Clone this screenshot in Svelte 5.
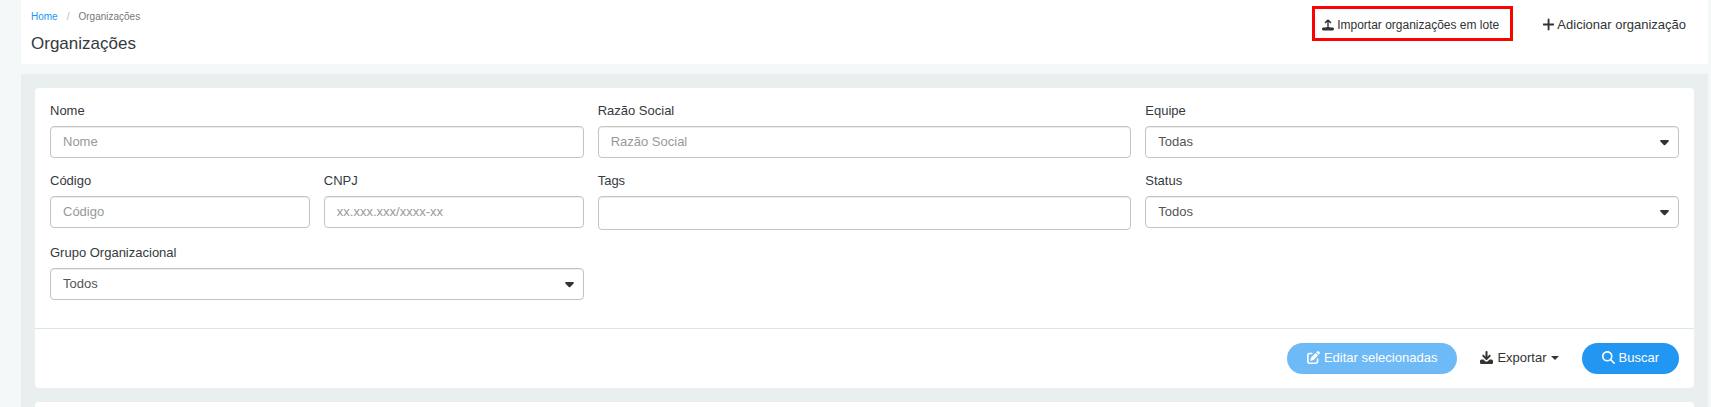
<script>
    let filters = $state({
        name: "",
        legalName: "",
        team: "Todas",
        code: "",
        cnpj: "",
        tags: "",
        status: "Todos",
        group: "Todos",
    });

    const selected = [];
</script>

{#snippet caret()}
    <svg class="caret" viewBox="0 0 9 6" aria-hidden="true">
        <path
            d="M1 0h7c.8 0 1.200.9.600 1.500L5.200 5c-.4.4-1 .4-1.400 0L.400 1.500C-.200.900.200 0 1 0z"
        />
    </svg>
{/snippet}

{#snippet textField(id, label, key, placeholder, size)}
    <div class="field {size}">
        <label for={id}>{label}</label>
        <input {id} type="text" {placeholder} bind:value={filters[key]} />
    </div>
{/snippet}

{#snippet selectField(id, label, key, option)}
    <div class="field wide">
        <label for={id}>{label}</label>
        <div class="select">
            <select {id} bind:value={filters[key]}>
                <option>{option}</option>
            </select>
            {@render caret()}
        </div>
    </div>
{/snippet}

<div class="page">
    <header>
        <div>
            <nav aria-label="breadcrumb">
                <a href="#home">Home</a>
                <span class="separator">/</span>
                <span>Organizações</span>
            </nav>
            <h1>Organizações</h1>
        </div>

        <div class="header-actions">
            <button type="button" class="link import">
                <svg class="icon" viewBox="0 0 512 512" aria-hidden="true">
                    <path
                        d="M226 340V120l-62 56c-14 12-34 10-44-2s-10-32 4-44L236 24c12-10 28-10 40 0l112 106c14 12 14 32 4 44s-30 14-44 2l-62-56v220c60 10 80 24 120 24h34c40 0 72 24 72 62s-30 66-66 66H66c-36 0-66-28-66-66s32-62 72-62h34c40 0 60-14 120-24z"
                    />
                </svg>
                Importar organizações em lote
            </button>
            <button type="button" class="link">
                <svg class="icon" viewBox="32 32 384 448" aria-hidden="true">
                    <path
                        d="M256 80c0-18-14-32-32-32s-32 14-32 32v144H48c-18 0-32 14-32 32s14 32 32 32h144v144c0 18 14 32 32 32s32-14 32-32V288h144c18 0 32-14 32-32s-14-32-32-32H256z"
                    />
                </svg>
                Adicionar organização
            </button>
        </div>
    </header>

    <main>
        <form class="card" onsubmit={(e) => e.preventDefault()}>
            <div class="fields">
                {@render textField("name", "Nome", "name", "Nome", "wide")}
                {@render textField("legal-name", "Razão Social", "legalName", "Razão Social", "wide")}
                {@render selectField("team", "Equipe", "team", "Todas")}
                <div class="pair">
                    {@render textField("code", "Código", "code", "Código", "half")}
                    {@render textField("cnpj", "CNPJ", "cnpj", "xx.xxx.xxx/xxxx-xx", "half")}
                </div>
                {@render textField("tags", "Tags", "tags", "", "tags")}
                {@render selectField("status", "Status", "status", "Todos")}
                {@render selectField("group", "Grupo Organizacional", "group", "Todos")}
            </div>

            <footer>
                <button type="button" class="pill" disabled={selected.length === 0}>
                    <svg class="icon" viewBox="0 0 512 512" aria-hidden="true">
                        <path
                            d="M471.600 21.700c-21.900-21.900-57.300-21.900-79.200 0L362.300 51.700l97.900 97.900 30.100-30.100c21.900-21.900 21.900-57.300 0-79.200L471.600 21.700zm-299.200 220c-6.100 6.100-10.800 13.600-13.500 21.900l-29.600 88.800c-2.900 8.600-.6 18.100 5.800 24.600s15.900 8.700 24.600 5.800l88.800-29.600c8.200-2.700 15.700-7.400 21.900-13.500L437.700 172.300 339.700 74.300 172.400 241.700zM96 64C43 64 0 107 0 160V416c0 53 43 96 96 96H352c53 0 96-43 96-96V320c0-17.700-14.300-32-32-32s-32 14.300-32 32v96c0 17.700-14.300 32-32 32H96c-17.700 0-32-14.300-32-32V160c0-17.700 14.300-32 32-32h96c17.700 0 32-14.300 32-32s-14.300-32-32-32H96z"
                        />
                    </svg>
                    Editar selecionadas
                </button>
                <button type="button" class="link">
                    <svg class="icon" viewBox="0 0 512 512" aria-hidden="true">
                        <path
                            d="M296 32c0-20-16-32-40-32s-40 12-40 32v190l-62-62c-14-14-38-14-52 0s-14 38 0 52l128 128c14 14 38 14 52 0l128-128c14-14 14-38 0-52s-38-14-52 0l-62 62V32zM64 336c-35 0-64 29-64 64v48c0 35 29 64 64 64H448c35 0 64-29 64-64V400c0-35-29-64-64-64H374L316 394c-34 32-86 32-120 0L138 336H64z"
                        />
                    </svg>
                    Exportar
                    <svg class="caret small" viewBox="0 0 8 4" aria-hidden="true">
                        <path d="M0 0h8L4 4z" />
                    </svg>
                </button>
                <button type="submit" class="pill">
                    <svg class="icon" viewBox="0 0 512 512" aria-hidden="true">
                        <path
                            d="M416 208c0 45.900-14.900 88.300-40 122.700L502.600 457.400c12.500 12.500 12.500 32.800 0 45.300s-32.800 12.500-45.300 0L330.700 376c-34.400 25.200-76.800 40-122.700 40C93.100 416 0 322.900 0 208S93.100 0 208 0S416 93.100 416 208zM208 352a144 144 0 1 0 0-288 144 144 0 1 0 0 288z"
                        />
                    </svg>
                    Buscar
                </button>
            </footer>
        </form>

        <section class="card results"></section>
    </main>
</div>

<style>
    :global(body) {
        background: #f4f8f9;
    }

    .page {
        display: flex;
        flex-direction: column;
        min-height: 100vh;
        margin: 0 3px 0 21px;
        font-family: "Liberation Sans", Arial, sans-serif;
        font-size: 13px;
        line-height: 20px;
        color: #343a40;
    }

    header {
        display: flex;
        justify-content: space-between;
        align-items: flex-start;
        margin-bottom: 10px;
        padding: 6px 22px 10px 10px;
        background: #fff;
    }

    nav {
        display: flex;
        gap: 9px;
        padding-top: 1px;
        font-size: 10px;
        color: #777;
    }

    nav a {
        color: #2196f3;
        text-decoration: none;
    }

    .separator {
        color: #bbb;
    }

    h1 {
        margin: 7px 0 0;
        font-size: 17px;
        font-weight: 400;
    }

    .header-actions {
        display: flex;
        align-items: baseline;
        gap: 30px;
    }

    button,
    input,
    select {
        box-sizing: border-box;
        font-family: inherit;
        font-size: 13px;
    }

    button {
        display: inline-flex;
        align-items: center;
        gap: 4px;
        border: 0;
        line-height: 20px;
        cursor: pointer;
    }

    .link {
        padding: 0;
        background: none;
        color: #333;
    }

    .header-actions .link {
        gap: 3px;
    }

    .import {
        padding: 6px 11px 3px 7px;
        border: 3px solid #f00;
        font-size: 12px;
    }

    .icon {
        height: 13px;
        fill: currentColor;
    }

    .import .icon {
        height: 12px;
    }

    main {
        display: flex;
        flex: 1;
        flex-direction: column;
        gap: 14px;
        padding: 14px 14px 0;
        background: #e9eeee;
    }

    .card {
        border-radius: 4px;
        background: #fff;
    }

    .fields {
        display: grid;
        grid-template-columns: repeat(3, minmax(0, 1fr));
        gap: 13px 14px;
        padding: 13px 15px 28px;
    }

    .pair {
        display: grid;
        grid-template-columns: 1fr 1fr;
        gap: 14px;
    }

    label {
        display: block;
        margin-bottom: 5px;
    }

    input,
    select {
        display: block;
        width: 100%;
        height: 32px;
        padding: 0 12px 2px;
        border: 1px solid #c4c4c4;
        border-radius: 4px;
        background: #fff;
        box-shadow: inset 0 1px 1px rgba(0, 0, 0, 0.08);
        color: #555;
    }

    .tags input {
        height: 34px;
    }

    input::placeholder {
        color: #999;
    }

    select {
        appearance: none;
    }

    .select {
        position: relative;
    }

    .caret {
        width: 9px;
        height: 6px;
        fill: #333;
    }

    .select .caret {
        position: absolute;
        top: 14px;
        right: 10px;
        pointer-events: none;
    }

    .caret.small {
        width: 8px;
        height: 4px;
    }

    footer {
        display: flex;
        justify-content: flex-end;
        gap: 23px;
        padding: 14px 15px;
        border-top: 1px solid #dee5e9;
    }

    footer .link {
        padding-bottom: 2px;
    }

    .pill {
        height: 31px;
        padding: 0 20px 2px;
        border-radius: 16px;
        background: #2196f3;
        color: #fff;
    }

    .pill:disabled {
        opacity: 0.65;
        cursor: default;
    }

    .results {
        flex: 1;
        border-radius: 4px 4px 0 0;
    }
</style>
